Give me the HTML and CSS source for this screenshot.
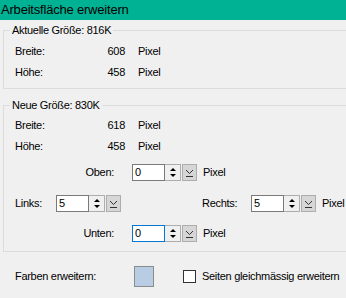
FILE: index.html
```html
<!DOCTYPE html>
<html lang="de">
<head>
    <meta charset="UTF-8">
    <title>Arbeitsfläche erweitern</title>
    <link rel="stylesheet" href="styles.css">
</head>
<body>
    <div class="titlebar">Arbeitsfläche erweitern</div>

    <fieldset class="group group-current">
        <legend>Aktuelle Größe: 816K</legend>
        <div class="info-row"><span class="info-label">Breite:</span><span class="info-value">608</span><span class="unit">Pixel</span></div>
        <div class="info-row"><span class="info-label">Höhe:</span><span class="info-value">458</span><span class="unit">Pixel</span></div>
    </fieldset>

    <fieldset class="group group-new">
        <legend>Neue Größe: 830K</legend>
        <div class="info-row"><span class="info-label">Breite:</span><span class="info-value">618</span><span class="unit">Pixel</span></div>
        <div class="info-row"><span class="info-label">Höhe:</span><span class="info-value">458</span><span class="unit">Pixel</span></div>

        <div class="edit-row row-top">
            <label class="side-label center-label">Oben:</label>
            <div class="spin">
                <input class="spin-input" type="text" value="0">
                <span class="spin-buttons"><span class="arrow-up"></span><span class="arrow-down"></span></span>
                <span class="spin-drop"><svg width="13" height="13" viewBox="0 0 13 13"><polyline points="3,4 6.5,7.5 10,4" fill="none" stroke="#333" stroke-width="1"/><line x1="3" y1="10.5" x2="10" y2="10.5" stroke="#333" stroke-width="1"/></svg></span>
            </div>
            <span class="unit">Pixel</span>
        </div>

        <div class="edit-row row-sides">
            <label class="side-label left-label">Links:</label>
            <div class="spin">
                <input class="spin-input" type="text" value="5">
                <span class="spin-buttons"><span class="arrow-up"></span><span class="arrow-down"></span></span>
                <span class="spin-drop"><svg width="13" height="13" viewBox="0 0 13 13"><polyline points="3,4 6.5,7.5 10,4" fill="none" stroke="#333" stroke-width="1"/><line x1="3" y1="10.5" x2="10" y2="10.5" stroke="#333" stroke-width="1"/></svg></span>
            </div>
            <label class="side-label right-label">Rechts:</label>
            <div class="spin">
                <input class="spin-input" type="text" value="5">
                <span class="spin-buttons"><span class="arrow-up"></span><span class="arrow-down"></span></span>
                <span class="spin-drop"><svg width="13" height="13" viewBox="0 0 13 13"><polyline points="3,4 6.5,7.5 10,4" fill="none" stroke="#333" stroke-width="1"/><line x1="3" y1="10.5" x2="10" y2="10.5" stroke="#333" stroke-width="1"/></svg></span>
            </div>
            <span class="unit">Pixel</span>
        </div>

        <div class="edit-row row-bottom">
            <label class="side-label center-label">Unten:</label>
            <div class="spin">
                <input class="spin-input focused" type="text" value="0">
                <span class="spin-buttons"><span class="arrow-up"></span><span class="arrow-down"></span></span>
                <span class="spin-drop"><svg width="13" height="13" viewBox="0 0 13 13"><polyline points="3,4 6.5,7.5 10,4" fill="none" stroke="#333" stroke-width="1"/><line x1="3" y1="10.5" x2="10" y2="10.5" stroke="#333" stroke-width="1"/></svg></span>
            </div>
            <span class="unit">Pixel</span>
        </div>
    </fieldset>

    <div class="footer">
        <span class="footer-label">Farben erweitern:</span>
        <span class="swatch"></span>
        <label class="check"><span class="checkbox"></span>Seiten gleichmässig erweitern</label>
    </div>
</body>
</html>
```

FILE: styles.css
```css
body {
    font-family: "Liberation Sans", Arial, sans-serif;
    font-size: 11px;
    letter-spacing: -0.3px;
    color: #000;
    background-color: #f0f0f0;
    margin: 0;
    padding: 0;
    width: 346px;
    height: 298px;
    overflow: hidden;
}
.titlebar {
    background-color: #00b294;
    height: 20px;
    line-height: 19px;
    font-size: 13px;
    letter-spacing: -0.2px;
    padding-left: 1px;
}
.group {
    border: 1px solid #dcdcdc;
    border-right: none;
    margin: 0 0 0 3px;
    padding: 0 0 0 11px;
    min-width: 0;
}
.group legend {
    padding: 0 2px;
    margin-left: -5px;
    line-height: 13px;
}
.group-current {
    margin-top: 4px;
    padding-top: 3px;
    padding-bottom: 6px;
}
.group-new {
    margin-top: 10px;
    padding-top: 2px;
    padding-bottom: 9px;
}
.info-row {
    display: flex;
    align-items: center;
    height: 21px;
}
.info-label {
    width: 81px;
}
.info-value {
    width: 29px;
    text-align: right;
}
.unit {
    margin-left: 13px;
}
.edit-row {
    display: flex;
    align-items: center;
    height: 18px;
}
.edit-row .unit {
    margin-left: 6px;
}
.row-top {
    margin-top: 7px;
}
.row-sides {
    margin-top: 13px;
}
.row-bottom {
    margin-top: 12px;
}
.center-label {
    width: 99px;
    margin-right: 18px;
    text-align: right;
}
.left-label {
    width: 41px;
}
.right-label {
    width: 42px;
    margin-left: 81px;
}
.right-label + .spin {
    margin-left: 7px;
}
.spin {
    display: flex;
    height: 17px;
}
.spin-input {
    width: 33px;
    height: 17px;
    box-sizing: border-box;
    border: 1px solid #7a7a7a;
    background: #fff;
    font-family: inherit;
    font-size: 11px;
    padding: 0 2px;
    margin: 0;
    outline: none;
}
.spin-input.focused {
    border-color: #0078d7;
}
.spin-buttons {
    width: 16px;
    box-sizing: border-box;
    border: 1px solid #adadad;
    border-left: none;
    background: #f0f0f0;
    display: flex;
    flex-direction: column;
    align-items: center;
    justify-content: space-evenly;
}
.arrow-up {
    width: 0;
    height: 0;
    border-left: 3px solid transparent;
    border-right: 3px solid transparent;
    border-bottom: 3px solid #000;
}
.arrow-down {
    width: 0;
    height: 0;
    border-left: 3px solid transparent;
    border-right: 3px solid transparent;
    border-top: 3px solid #000;
}
.spin-drop {
    width: 15px;
    margin-left: 1px;
    box-sizing: border-box;
    border: 1px solid #adadad;
    background: #d6d6d6;
    display: flex;
    align-items: center;
    justify-content: center;
}
.footer {
    display: flex;
    align-items: center;
    height: 48px;
    padding-left: 15px;
}
.footer-label {
    width: 119px;
}
.swatch {
    width: 20px;
    height: 21px;
    box-sizing: border-box;
    border: 1px solid #8c8c8c;
    background: #b8cce4;
}
.check {
    display: flex;
    align-items: center;
    margin-left: 29px;
    white-space: nowrap;
}
.checkbox {
    width: 13px;
    height: 13px;
    box-sizing: border-box;
    border: 1px solid #333;
    background: #fff;
    margin-right: 6px;
}
```
